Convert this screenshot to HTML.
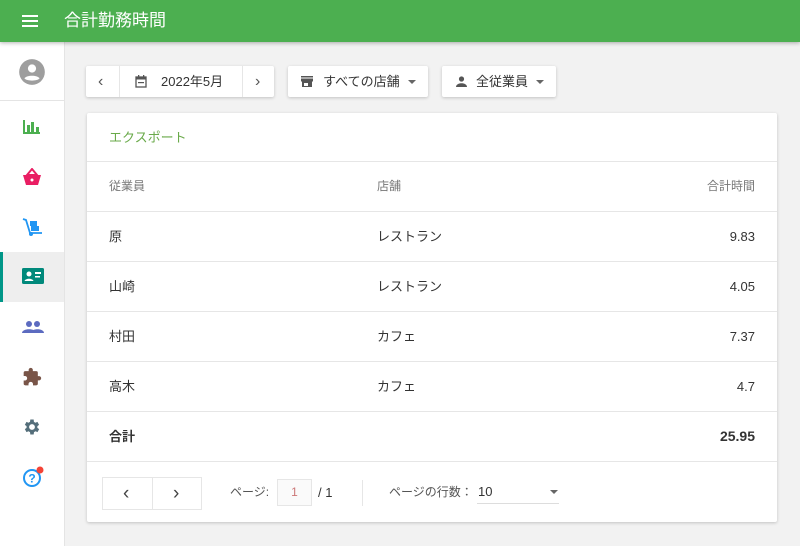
<!DOCTYPE html><html><head><meta charset="utf-8"><style>
*{box-sizing:border-box;margin:0;padding:0}
body{width:800px;height:546px;overflow:hidden;background:#f2f2f2;font-family:"Liberation Sans","Noto Sans CJK JP",sans-serif;font-size:13px;color:#333;position:relative}
.hdr{position:absolute;left:0;top:0;width:800px;height:42px;background:#4caf50;color:#fff;box-shadow:0 1px 4px rgba(0,0,0,.3);z-index:2}
.hdr .t{position:absolute;left:64px;top:0;line-height:42px;font-size:17px}
.side{position:absolute;left:0;top:42px;width:65px;height:504px;background:#fff;border-right:1px solid #e4e4e4}
.ic{position:absolute;left:22px}
.btn{position:absolute;top:66px;height:31px;line-height:31px;background:#fff;box-shadow:0 1px 3px rgba(0,0,0,.2);border-radius:2px;font-size:13px;color:#333}
.btn span{position:absolute;top:0;line-height:31px}
.card{position:absolute;left:87px;top:113px;width:690px;height:409px;background:#fff;box-shadow:0 1px 3px rgba(0,0,0,.2);border-radius:2px}
.row{position:absolute;left:0;width:690px;height:50px;line-height:49px;border-bottom:1px solid #e6e6e6}
.row span{position:absolute;top:0;line-height:49px}
.c1{left:22px}.c2{left:290px}.c3{right:22px}
.chev{font-size:16px;color:#555}
.car{position:absolute;top:14px;width:0;height:0;border:4px solid transparent;border-top-color:#666}
</style></head><body>
<div class="hdr"><svg style="position:absolute;left:22px;top:14px" width="18" height="14"><rect y="1" width="16" height="2" fill="#fff"/><rect y="6" width="16" height="2" fill="#fff"/><rect y="11" width="16" height="2" fill="#fff"/></svg><div class="t">合計勤務時間</div></div>
<div class="side">
<svg class="ic" style="top:16px;left:18px" width="28" height="28" viewBox="0 0 24 24"><circle cx="12" cy="12" r="11" fill="#9e9e9e"/><circle cx="12" cy="9" r="3.5" fill="#fff"/><path d="M5.5 17.5c2-3 11-3 13 0c-2 2.5-11 2.5-13 0z" fill="#fff"/></svg>
<div style="position:absolute;left:0;top:58px;width:64px;border-top:1px solid #e4e4e4"></div>
<svg class="ic" style="top:76px" width="20" height="18"><g fill="#4caf50"><rect x="1" y="2" width="2" height="14"/><rect x="5" y="7" width="3" height="9"/><rect x="9" y="4" width="3" height="12"/><rect x="14" y="9" width="3" height="7"/><rect x="1" y="14" width="17" height="2"/></g></svg>
<svg class="ic" style="top:126px" width="20" height="18"><path d="M10 1l-5 6h10z" fill="none" stroke="#e91e63" stroke-width="2"/><path d="M1 7h18l-3 10h-12z" fill="#e91e63"/><circle cx="10" cy="12" r="1.5" fill="#fff"/></svg>
<svg class="ic" style="top:175px" width="22" height="20"><path d="M1 2l3 1 4 13h12" fill="none" stroke="#2196f3" stroke-width="1.8"/><rect x="8" y="4" width="7" height="5" fill="#2196f3"/><rect x="9" y="9" width="8" height="5" fill="#2196f3"/><circle cx="9" cy="17" r="2" fill="#2196f3"/></svg>
<div style="position:absolute;left:0;top:210px;width:64px;height:50px;background:#eeeeee;border-left:3px solid #009688"></div>
<svg class="ic" style="top:225px" width="22" height="18"><rect x="0" y="1" width="22" height="16" rx="1.5" fill="#00897b"/><circle cx="7" cy="7" r="2.5" fill="#fff"/><path d="M2.5 14c1-3 8-3 9 0z" fill="#fff"/><rect x="13" y="5" width="6" height="2" fill="#fff"/><rect x="13" y="9" width="5" height="1.5" fill="#fff"/></svg>
<svg class="ic" style="top:278px" width="22" height="14"><g fill="#5c6bc0"><circle cx="7" cy="4" r="3"/><circle cx="15" cy="4" r="3"/><path d="M0 13c0-5 14-5 14 0z"/><path d="M9 13c0-5 13-5 13 0z"/></g></svg>
<svg class="ic" style="top:325px" width="20" height="20" viewBox="0 0 24 24"><path d="M20.5 11H19V7a2 2 0 0 0-2-2h-4V3.5a2.5 2.5 0 0 0-5 0V5H4a2 2 0 0 0-2 2v3.8h1.5a2.7 2.7 0 0 1 0 5.4H2V20a2 2 0 0 0 2 2h3.8v-1.5a2.7 2.7 0 0 1 5.4 0V22H17a2 2 0 0 0 2-2v-4h1.5a2.5 2.5 0 0 0 0-5z" fill="#795548"/></svg>
<svg class="ic" style="top:375px" width="20" height="20" viewBox="0 0 24 24"><path d="M19.4 13a7.5 7.5 0 0 0 0-2l2.1-1.6-2-3.5-2.5 1a7 7 0 0 0-1.7-1L15 3h-4l-.4 2.9a7 7 0 0 0-1.7 1l-2.5-1-2 3.5L6.5 11a7.5 7.5 0 0 0 0 2l-2.1 1.6 2 3.5 2.5-1a7 7 0 0 0 1.7 1L11 21h4l.4-2.9a7 7 0 0 0 1.7-1l2.5 1 2-3.5zM13 15.5a3.5 3.5 0 1 1 0-7 3.5 3.5 0 0 1 0 7z" fill="#546e7a" transform="translate(-1 0)"/></svg>
<svg class="ic" style="top:424px" width="24" height="22"><circle cx="10" cy="12" r="8" fill="none" stroke="#2196f3" stroke-width="2"/><text x="10" y="16.5" font-size="12" font-weight="bold" fill="#2196f3" text-anchor="middle" font-family="Liberation Sans">?</text><circle cx="18" cy="4" r="3.5" fill="#f44336"/></svg>
</div>
<div class="btn" style="left:86px;width:188px">
<span class="chev" style="left:12px">‹</span>
<div style="position:absolute;left:33px;top:0;height:31px;border-left:1px solid #e6e6e6"></div>
<svg style="position:absolute;left:49px;top:9px" width="12" height="13"><rect x="1" y="2" width="10" height="10" fill="none" stroke="#555" stroke-width="1.3"/><rect x="1" y="2" width="10" height="2.5" fill="#555"/><rect x="3" y="7" width="6" height="1.2" fill="#555"/><rect x="3" y="0" width="1.3" height="3" fill="#555"/><rect x="8" y="0" width="1.3" height="3" fill="#555"/></svg>
<span style="left:75px">2022年5月</span>
<div style="position:absolute;left:156px;top:0;height:31px;border-left:1px solid #e6e6e6"></div>
<span class="chev" style="left:169px">›</span></div>
<div class="btn" style="left:288px;width:140px">
<svg style="position:absolute;left:13px;top:10px" width="12" height="11"><rect x="0" y="0" width="12" height="1.5" fill="#555"/><rect x="0" y="2.5" width="12" height="3" fill="#555"/><rect x="1" y="5" width="10" height="6" fill="#555"/><rect x="3" y="7" width="4" height="3" fill="#fff"/></svg>
<span style="left:35px">すべての店舗</span>
<i class="car" style="left:120px"></i></div>
<div class="btn" style="left:442px;width:114px">
<svg style="position:absolute;left:14px;top:10px" width="11" height="11"><circle cx="5.5" cy="3" r="2.6" fill="#555"/><path d="M0 11c0-5 11-5 11 0z" fill="#555"/></svg>
<span style="left:34px">全従業員</span>
<i class="car" style="left:94px"></i></div>
<div class="card">
<div class="row" style="top:0;height:49px"><span class="c1" style="color:#6aaa4a">エクスポート</span></div>
<div class="row" style="top:49px;color:#777;font-size:12px"><span class="c1">従業員</span><span class="c2">店舗</span><span class="c3">合計時間</span></div>
<div class="row" style="top:99px"><span class="c1">原</span><span class="c2">レストラン</span><span class="c3">9.83</span></div>
<div class="row" style="top:149px"><span class="c1">山崎</span><span class="c2">レストラン</span><span class="c3">4.05</span></div>
<div class="row" style="top:199px"><span class="c1">村田</span><span class="c2">カフェ</span><span class="c3">7.37</span></div>
<div class="row" style="top:249px"><span class="c1">高木</span><span class="c2">カフェ</span><span class="c3">4.7</span></div>
<div class="row" style="top:299px;font-weight:bold"><span class="c1">合計</span><span class="c3" style="font-size:14px">25.95</span></div>
<div style="position:absolute;left:15px;top:364px;width:100px;height:33px;border:1px solid #e6e6e6;line-height:31px"><div style="position:absolute;left:49px;top:0;height:31px;border-left:1px solid #e6e6e6"></div><span style="position:absolute;left:20px;top:0;font-size:19px;color:#444">‹</span><span style="position:absolute;left:70px;top:0;font-size:19px;color:#444">›</span></div>
<span style="position:absolute;left:143px;top:366px;line-height:27px;font-size:12px;color:#555">ページ:</span>
<div style="position:absolute;left:190px;top:366px;width:35px;height:27px;border:1px solid #e6e6e6;background:#fafafa;color:#c77;text-align:center;line-height:25px;font-size:12px">1</div>
<span style="position:absolute;left:231px;top:366px;line-height:27px;font-size:13px">/ 1</span>
<div style="position:absolute;left:275px;top:367px;height:26px;border-left:1px solid #e6e6e6"></div>
<span style="position:absolute;left:302px;top:366px;line-height:27px;font-size:12px;color:#555">ページの行数：</span>
<span style="position:absolute;left:391px;top:365px;line-height:27px;font-size:13px">10</span>
<div style="position:absolute;left:390px;top:390px;width:82px;border-top:1px solid #ddd"></div>
<span style="position:absolute;left:463px;top:377px;border:4px solid transparent;border-top-color:#666"></span>
</div>
</body></html>
